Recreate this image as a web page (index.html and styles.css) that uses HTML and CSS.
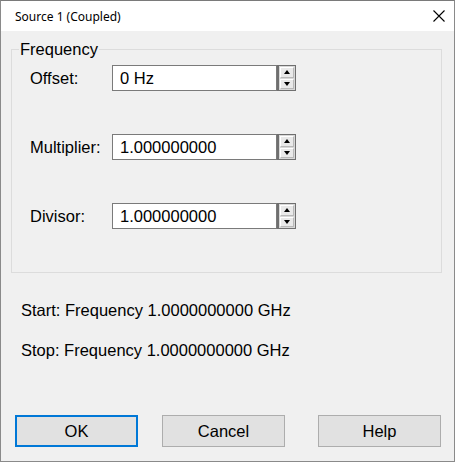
FILE: index.html
```html
<!DOCTYPE html>
<html>
<head>
<meta charset="utf-8">
<link rel="stylesheet" href="styles.css">
</head>
<body>
<div class="window">
  <div class="titlebar">
    <span class="title">Source 1 (Coupled)</span>
    <svg class="close" width="12" height="12" viewBox="0 0 12 12"><path d="M0.5 0.5 L11.5 11.5 M11.5 0.5 L0.5 11.5" stroke="#000" stroke-width="1.1" fill="none"/></svg>
  </div>
  <div class="body">
    <fieldset class="group">
      <legend class="legend">Frequency</legend>
      <div class="row">
        <span class="label">Offset:</span>
        <div class="field"><span class="value">0 Hz</span></div>
        <div class="spin"><div class="sb"><span class="up"></span></div><div class="sb"><span class="down"></span></div></div>
      </div>
      <div class="row">
        <span class="label">Multiplier:</span>
        <div class="field"><span class="value">1.000000000</span></div>
        <div class="spin"><div class="sb"><span class="up"></span></div><div class="sb"><span class="down"></span></div></div>
      </div>
      <div class="row">
        <span class="label">Divisor:</span>
        <div class="field"><span class="value">1.000000000</span></div>
        <div class="spin"><div class="sb"><span class="up"></span></div><div class="sb"><span class="down"></span></div></div>
      </div>
    </fieldset>
    <div class="info">Start: Frequency 1.0000000000 GHz</div>
    <div class="info">Stop: Frequency 1.0000000000 GHz</div>
    <div class="buttons">
      <div class="btn default">OK</div>
      <div class="btn">Cancel</div>
      <div class="btn">Help</div>
    </div>
  </div>
</div>
</body>
</html>
```
FILE: styles.css
```css
* { box-sizing: border-box; }
html, body { margin: 0; padding: 0; }
body { width: 455px; height: 462px; overflow: hidden; background: #f0f0f0; font-family: "Liberation Sans", Arial, sans-serif; color: #000; }
.window { width: 455px; height: 462px; border: 1px solid #8a8a8a; border-top-color: #7a7a7a; background: #f0f0f0; display: flex; flex-direction: column; }
.titlebar { height: 30px; background: #fff; display: flex; align-items: center; justify-content: space-between; padding: 0 9px 0 14px; flex: none; }
.title { font-family: "Noto Sans", "Open Sans", sans-serif; font-size: 12px; color: #000; }
.close { display: block; }
.body { flex: 1; display: flex; flex-direction: column; padding: 0 12px 0 10px; }
.group { margin: 9px 0 0 0; padding: 7px 0 0 18px; border: 1px solid #dcdcdc; height: 233px; min-width: 0; }
.legend { font-size: 16.5px; line-height: 18px; padding: 0 1px; margin-left: -11px; }
.row { display: flex; align-items: center; height: 26px; margin-bottom: 43px; }
.label { width: 82px; font-size: 16.5px; }
.field { width: 165px; height: 26px; background: #fff; border: 1px solid #7a7a7a; display: flex; align-items: center; padding-left: 7px; font-size: 16.5px; }
.spin { width: 19px; height: 26px; border: 1px solid #6f6f6f; border-left-width: 2px; display: flex; flex-direction: column; padding: 1px; gap: 1px; background: #d8d8d8; }
.sb { flex: 1; background: #e9e9e9; border: 1px solid #b8b8b8; border-top-color: #fff; border-left-color: #fff; display: flex; align-items: center; justify-content: center; }
.up { width: 0; height: 0; border-left: 3.5px solid transparent; border-right: 3.5px solid transparent; border-bottom: 4px solid #000; }
.down { width: 0; height: 0; border-left: 3.5px solid transparent; border-right: 3.5px solid transparent; border-top: 4px solid #000; }
.info { font-size: 16.5px; padding-left: 10px; line-height: 18px; }
.group + .info { margin-top: 28px; }
.info + .info { margin-top: 22px; }
.buttons { display: flex; margin-top: auto; margin-bottom: 14px; padding-left: 4px; gap: 24px; }
.buttons .btn:last-child { margin-left: 9px; }
.btn { width: 123px; height: 32px; background: #e1e1e1; border: 1px solid #adadad; display: flex; align-items: center; justify-content: center; font-size: 16.5px; }
.btn.default { border: 2px solid #0078d7; }
```
